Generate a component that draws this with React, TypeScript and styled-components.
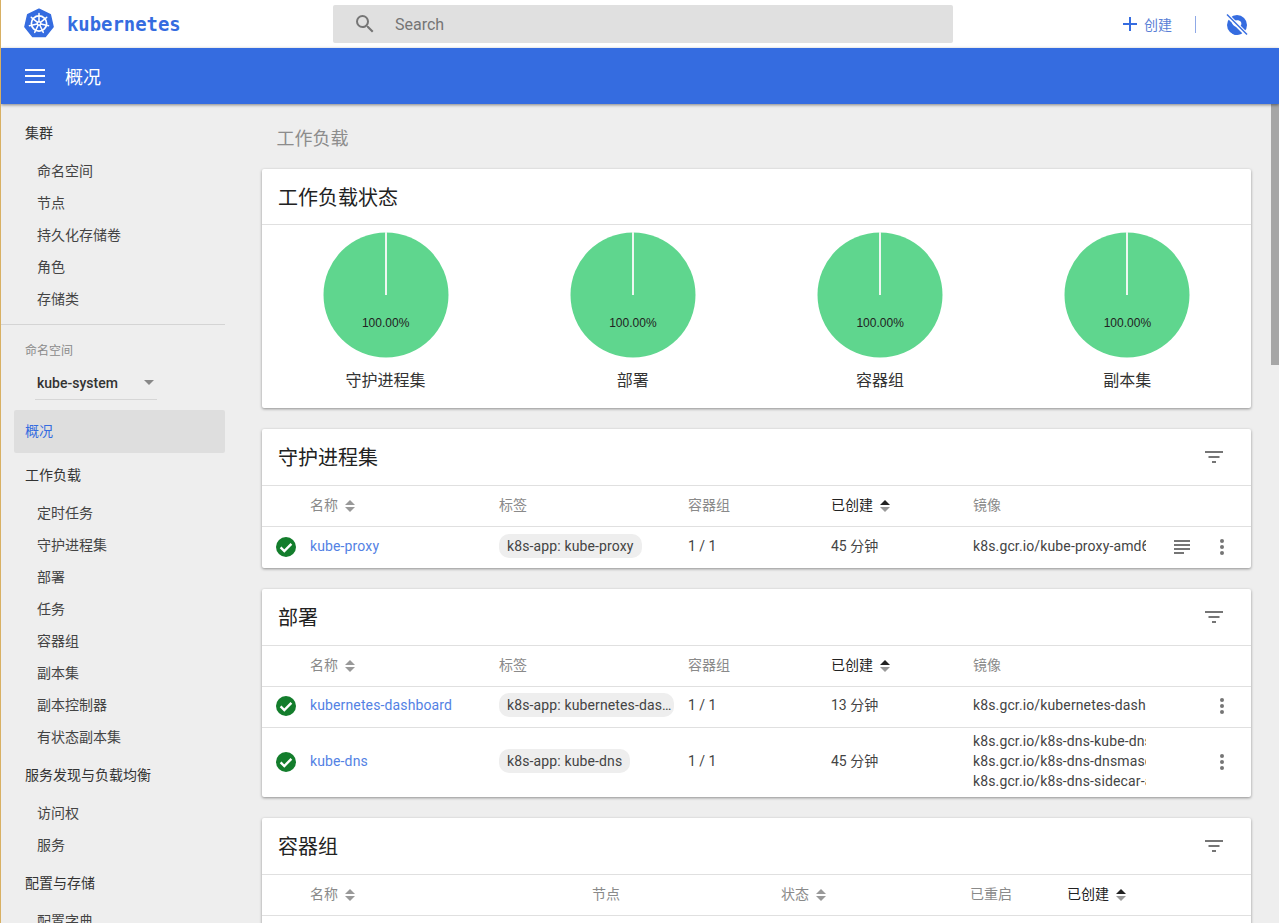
import React from "react";
import styled, { createGlobalStyle } from "styled-components";

const FONT = `Roboto, "Noto Sans CJK SC", "Liberation Sans", sans-serif`;
const BLUE = "#356ce0";

const Global = createGlobalStyle`
  html, body { margin: 0; padding: 0; height: 100%; overflow: hidden; background: #eeeeee; }
  * { box-sizing: border-box; }
  #root { height: 100%; }
`;

const Page = styled.div`
  height: 923px;
  display: flex;
  flex-direction: column;
  border-left: 1px solid #d8b063;
  font-family: ${FONT};
  font-size: 14px;
  color: rgba(0, 0, 0, 0.87);
  overflow: hidden;
`;

const Toolbar = styled.header`
  height: 48px;
  flex: none;
  background: #fff;
  display: flex;
  align-items: center;
  padding-left: 22px;
`;

const Logo = styled.div`
  display: flex;
  align-items: center;
  width: 310px;
  gap: 12px;
`;

const LogoText = styled.span`
  font-family: "DejaVu Sans Mono", monospace;
  font-weight: 700;
  font-size: 18.9px;
  color: ${BLUE};
`;

const SearchBox = styled.div`
  width: 620px;
  height: 38px;
  background: #e0e0e0;
  border-radius: 2px;
  display: flex;
  align-items: center;
  padding-left: 20px;
  gap: 18px;
  color: #757575;
  font-size: 16px;
`;

const ToolActions = styled.div`
  margin-left: auto;
  display: flex;
  align-items: center;
  padding-right: 31px;
`;

const CreateButton = styled.div`
  display: flex;
  align-items: center;
  gap: 6px;
  color: #5a7fd6;
  font-size: 14px;
`;

const ToolDivider = styled.span`
  width: 1px;
  height: 17px;
  background: #8fa9e6;
  margin: 0 30px 0 23px;
`;

const TitleBar = styled.div`
  height: 56px;
  flex: none;
  background: ${BLUE};
  color: #fff;
  display: flex;
  align-items: center;
  padding-left: 24px;
  gap: 20px;
  font-size: 18px;
  box-shadow: 0 1px 3px rgba(0, 0, 0, 0.45);
  position: relative;
  z-index: 2;
`;

const Body = styled.div`
  flex: 1;
  min-height: 0;
  display: flex;
`;

const Sidebar = styled.nav`
  width: 224px;
  flex: none;
  padding-top: 6px;
  overflow: hidden;
`;

const NavHeader = styled.div`
  height: 44px;
  padding-left: 24px;
  display: flex;
  align-items: center;
  color: #333;
  font-size: 14px;
`;

const NavActive = styled(NavHeader)`
  margin: 0 0 -1px 13px;
  padding: 0 0 3px 11px;
  height: 43px;
  background: #dedede;
  border-radius: 2px;
  color: ${BLUE};
`;

const NavItem = styled.div`
  height: 32px;
  padding-left: 36px;
  display: flex;
  align-items: center;
  color: #444;
  font-size: 14px;
`;

const NavDivider = styled.hr`
  border: 0;
  height: 1px;
  background: #d4d4d4;
  margin: 10px 0 0;
`;

const NamespaceBlock = styled.div`
  height: 85px;
  padding: 18px 0 0 24px;
`;

const NamespaceLabel = styled.div`
  font-size: 12px;
  line-height: 16px;
  color: #8a8a8a;
`;

const NamespaceSelect = styled.div`
  width: 122px;
  height: 32px;
  margin: 9px 0 0 10px;
  padding: 0 0 2px 2px;
  display: flex;
  align-items: center;
  justify-content: space-between;
  border-bottom: 1px solid #d6d6d6;
  font-weight: 500;
  font-size: 14px;
  color: #333;
`;

const SelectArrow = styled.span`
  width: 0;
  height: 0;
  margin-right: 3px;
  border-left: 5px solid transparent;
  border-right: 5px solid transparent;
  border-top: 5px solid #888;
`;

const Main = styled.main`
  flex: 1;
  min-width: 0;
  position: relative;
  overflow: hidden;
  padding: 0 28px 0 37px;
`;

const ScrollThumb = styled.div`
  position: absolute;
  top: 0;
  right: 0;
  width: 8px;
  height: 261px;
  background: #a6a6a6;
`;

const PageTitle = styled.h2`
  margin: 0;
  height: 65px;
  padding: 21px 0 0 14.5px;
  font-size: 18px;
  line-height: 28px;
  font-weight: 400;
  color: #8c8c8c;
`;

const Card = styled.section`
  background: #fff;
  border-radius: 2px;
  box-shadow: 0 1px 3px rgba(0, 0, 0, 0.4);
  margin-bottom: 21px;
`;

const CardHeader = styled.div`
  height: 56px;
  padding: 0 25px 0 16px;
  display: flex;
  align-items: center;
  justify-content: space-between;
  border-bottom: 1px solid #e0e0e0;
  font-size: 20px;
  color: #222;
`;

const TableHeader = styled(CardHeader)`
  height: 57px;
  padding-bottom: 2px;
`;

const Charts = styled.div`
  display: grid;
  grid-template-columns: repeat(4, 1fr);
  height: 183px;
`;

const Chart = styled.div`
  display: flex;
  flex-direction: column;
  align-items: center;
  padding-top: 7px;
`;

const PieWrap = styled.div`
  width: 126px;
  height: 126px;
  position: relative;
`;

const PieLabel = styled.span`
  position: absolute;
  left: 0;
  right: 0;
  top: 84px;
  text-align: center;
  font-family: "Liberation Sans", sans-serif;
  font-size: 12px;
  line-height: 14px;
  color: #222;
`;

const ChartName = styled.div`
  margin-top: 11px;
  font-size: 16px;
  line-height: 24px;
  color: #333;
`;

const Row = styled.div<{ $cols: string; $h: number }>`
  display: grid;
  grid-template-columns: ${(p) => p.$cols};
  align-items: center;
  height: ${(p) => p.$h}px;
  padding-bottom: 2px;
  border-bottom: 1px solid #e0e0e0;
  &:last-child { border-bottom: 0; }
`;

const HeadCell = styled.div<{ $active?: boolean }>`
  display: flex;
  align-items: center;
  gap: 7px;
  font-size: 14px;
  color: ${(p) => (p.$active ? "#222" : "#8a8a8a")};
`;

const HeadLabel = styled.span`
  line-height: 20px;
`;

const SortSvg = styled.svg`
  margin-top: 2px;
`;

const FilterSvg = styled.svg`
  margin-top: 2px;
`;

const StatusCell = styled.div`
  display: flex;
  padding-left: 14px;
`;

const LinkCell = styled.div`
  color: ${BLUE};
  font-size: 14px;
  line-height: 20px;
  letter-spacing: 0.13px;
  opacity: 0.85;
  margin-bottom: 2px;
`;

const TextCell = styled.div`
  color: #444;
  font-size: 14px;
  line-height: 20px;
  margin-bottom: 2px;
`;

const ChipCell = styled.div`
  margin-bottom: 2px;
`;

const Chip = styled.span<{ $clipped?: boolean }>`
  display: inline-block;
  height: 24px;
  line-height: 24px;
  padding: 0 ${(p) => (p.$clipped ? 2 : 8)}px 0 8px;
  border-radius: 10px;
  background: #eeeeee;
  color: #444;
  font-size: 14px;
  letter-spacing: 0.13px;
  white-space: nowrap;
  vertical-align: middle;
`;

const ImageCell = styled.div`
  overflow: hidden;
  white-space: nowrap;
  color: #444;
  font-size: 14px;
  letter-spacing: 0.13px;
  line-height: 20px;
  margin-bottom: 2px;
`;

const Actions = styled.div`
  display: flex;
  align-items: center;
  justify-content: flex-end;
  padding-right: 17px;
  gap: 16px;
`;

const Sort = ({ active }: { active?: boolean }) => (
  <SortSvg width="10" height="14" viewBox="0 0 10 14">
    <path d="M5 1 L10 6 H0 Z" fill={active ? "#222" : "#999"} />
    <path d="M0 8 H10 L5 13 Z" fill="#999" />
  </SortSvg>
);

const Filter = () => (
  <FilterSvg width="24" height="24" viewBox="0 0 24 24" fill="#757575">
    <path d="M3 6h18v2H3zM6.5 11h11v2h-11zM10 16h4v2h-4z" />
  </FilterSvg>
);

const More = () => (
  <svg width="24" height="24" viewBox="0 0 24 24" fill="#757575">
    <circle cx="12" cy="6" r="2" />
    <circle cx="12" cy="12" r="2" />
    <circle cx="12" cy="18" r="2" />
  </svg>
);

const Logs = () => (
  <svg width="24" height="24" viewBox="0 0 24 24" fill="#757575">
    <path d="M4 5h16v2H4zM4 9h16v2H4zM4 13h16v2H4zM4 17h10v2H4z" />
  </svg>
);

const Check = () => (
  <svg width="20" height="20" viewBox="0 0 20 20">
    <circle cx="10" cy="10" r="10" fill="#137d2c" />
    <path d="M4.6 10.4 L8.3 14 L15.4 6.8" fill="none" stroke="#fff" strokeWidth="2.4" />
  </svg>
);

const Pie = () => (
  <svg width="126" height="126" viewBox="0 0 126 126">
    <circle cx="63" cy="63" r="62.5" fill="#5fd68e" />
    <rect x="62" y="0" width="2" height="63" fill="#eef7f1" />
  </svg>
);

const KubeLogo = () => (
  <svg width="32" height="32" viewBox="0 0 32 32">
    <path d="M16 1.2 L27.3 6.6 L30.1 18.8 L22.3 28.6 H9.7 L1.9 18.8 L4.7 6.6 Z" fill={BLUE} stroke={BLUE} strokeWidth="1.5" strokeLinejoin="round" />
    <g fill="none" stroke="#fff" strokeLinecap="round">
      <circle cx="16" cy="15.5" r="7.6" strokeWidth="1.7" />
      <circle cx="16" cy="15.5" r="1.7" strokeWidth="1.4" />
      <path strokeWidth="1.5" d="M16 5.6V13.6M23.7 9.3L17.5 14.3M25.6 17.7L17.9 15.9M20.3 24.4L16.9 17.2M11.7 24.4L15.1 17.2M6.4 17.7L14.1 15.9M8.3 9.3L14.5 14.3" />
    </g>
  </svg>
);

const SearchIcon = () => (
  <svg width="24" height="24" viewBox="0 0 24 24" fill="#757575">
    <path d="M15.5 14h-.79l-.28-.27A6.47 6.47 0 0 0 16 9.5 6.5 6.5 0 1 0 9.5 16c1.61 0 3.09-.59 4.23-1.57l.27.28v.79l5 4.99L20.49 19l-4.99-5zm-6 0C7.01 14 5 11.99 5 9.5S7.01 5 9.5 5 14 7.01 14 9.5 11.99 14 9.5 14z" />
  </svg>
);

const Menu = () => (
  <svg width="20" height="14" viewBox="0 0 20 14" fill="#fff">
    <path d="M0 0h20v2H0zM0 6h20v2H0zM0 12h20v2H0z" />
  </svg>
);

const Plus = () => (
  <svg width="16" height="16" viewBox="0 0 16 16" fill={BLUE}>
    <path d="M7 1h2v6h6v2H9v6H7V9H1V7h6z" />
  </svg>
);

const NoUser = () => (
  <svg width="22" height="24" viewBox="0 0 22 24">
    <circle cx="11" cy="13" r="10" fill={BLUE} />
    <path d="M6 11c1-3 7-4 9-1 1 2 0 4-2 5-3 0-6-1-7-4z" fill="#fff" />
    <path d="M3 14c3 2 7 5 12 8l-6 1c-3-1-5-4-6-9z" fill={BLUE} />
    <path d="M1.5 3.5 L20.5 22.5" stroke="#fff" strokeWidth="4" />
    <path d="M1 2.5 L21 22.5" stroke={BLUE} strokeWidth="1.4" />
  </svg>
);

const COLS = "48px 189px 189px 143px 142px 173px 1fr";
const POD_COLS = "48px 282px 189px 189px 97px 1fr";

const nav: { title: string; items: string[] }[] = [
  { title: "工作负载", items: ["定时任务", "守护进程集", "部署", "任务", "容器组", "副本集", "副本控制器", "有状态副本集"] },
  { title: "服务发现与负载均衡", items: ["访问权", "服务"] },
  { title: "配置与存储", items: ["配置字典"] },
];

const WorkloadHead = () => (
  <Row $cols={COLS} $h={41}>
    <span />
    <HeadCell><HeadLabel>名称</HeadLabel><Sort /></HeadCell>
    <HeadCell><HeadLabel>标签</HeadLabel></HeadCell>
    <HeadCell><HeadLabel>容器组</HeadLabel></HeadCell>
    <HeadCell $active><HeadLabel>已创建</HeadLabel><Sort active /></HeadCell>
    <HeadCell><HeadLabel>镜像</HeadLabel></HeadCell>
    <span />
  </Row>
);

export default function App() {
  return (
    <Page>
      <Global />
      <Toolbar>
        <Logo>
          <KubeLogo />
          <LogoText>kubernetes</LogoText>
        </Logo>
        <SearchBox>
          <SearchIcon />
          <span>Search</span>
        </SearchBox>
        <ToolActions>
          <CreateButton><Plus />创建</CreateButton>
          <ToolDivider />
          <NoUser />
        </ToolActions>
      </Toolbar>
      <TitleBar>
        <Menu />
        <span>概况</span>
      </TitleBar>
      <Body>
        <Sidebar>
          <NavHeader>集群</NavHeader>
          {["命名空间", "节点", "持久化存储卷", "角色", "存储类"].map((t) => (
            <NavItem key={t}>{t}</NavItem>
          ))}
          <NavDivider />
          <NamespaceBlock>
            <NamespaceLabel>命名空间</NamespaceLabel>
            <NamespaceSelect>kube-system<SelectArrow /></NamespaceSelect>
          </NamespaceBlock>
          <NavActive>概况</NavActive>
          {nav.map((g) => (
            <React.Fragment key={g.title}>
              <NavHeader>{g.title}</NavHeader>
              {g.items.map((t) => <NavItem key={t}>{t}</NavItem>)}
            </React.Fragment>
          ))}
        </Sidebar>
        <Main>
          <ScrollThumb />
          <PageTitle>工作负载</PageTitle>
          <Card>
            <CardHeader>工作负载状态</CardHeader>
            <Charts>
              {["守护进程集", "部署", "容器组", "副本集"].map((t) => (
                <Chart key={t}>
                  <PieWrap>
                    <Pie />
                    <PieLabel>100.00%</PieLabel>
                  </PieWrap>
                  <ChartName>{t}</ChartName>
                </Chart>
              ))}
            </Charts>
          </Card>
          <Card>
            <TableHeader>守护进程集<Filter /></TableHeader>
            <WorkloadHead />
            <Row $cols={COLS} $h={41}>
              <StatusCell><Check /></StatusCell>
              <LinkCell>kube-proxy</LinkCell>
              <ChipCell><Chip>k8s-app: kube-proxy</Chip></ChipCell>
              <TextCell>1 / 1</TextCell>
              <TextCell>45 分钟</TextCell>
              <ImageCell>k8s.gcr.io/kube-proxy-amd64:v1.10.0</ImageCell>
              <Actions><Logs /><More /></Actions>
            </Row>
          </Card>
          <Card>
            <TableHeader>部署<Filter /></TableHeader>
            <WorkloadHead />
            <Row $cols={COLS} $h={41}>
              <StatusCell><Check /></StatusCell>
              <LinkCell>kubernetes-dashboard</LinkCell>
              <ChipCell><Chip $clipped>k8s-app: kubernetes-das…</Chip></ChipCell>
              <TextCell>1 / 1</TextCell>
              <TextCell>13 分钟</TextCell>
              <ImageCell>k8s.gcr.io/kubernetes-dashboard-amd64</ImageCell>
              <Actions><More /></Actions>
            </Row>
            <Row $cols={COLS} $h={69}>
              <StatusCell><Check /></StatusCell>
              <LinkCell>kube-dns</LinkCell>
              <ChipCell><Chip>k8s-app: kube-dns</Chip></ChipCell>
              <TextCell>1 / 1</TextCell>
              <TextCell>45 分钟</TextCell>
              <ImageCell>
                <div>k8s.gcr.io/k8s-dns-kube-dns-amd64</div>
                <div>k8s.gcr.io/k8s-dns-dnsmasq-nanny</div>
                <div>k8s.gcr.io/k8s-dns-sidecar-amd64</div>
              </ImageCell>
              <Actions><More /></Actions>
            </Row>
          </Card>
          <Card>
            <TableHeader>容器组<Filter /></TableHeader>
            <Row $cols={POD_COLS} $h={41}>
              <span />
              <HeadCell><HeadLabel>名称</HeadLabel><Sort /></HeadCell>
              <HeadCell><HeadLabel>节点</HeadLabel></HeadCell>
              <HeadCell><HeadLabel>状态</HeadLabel><Sort /></HeadCell>
              <HeadCell><HeadLabel>已重启</HeadLabel></HeadCell>
              <HeadCell $active><HeadLabel>已创建</HeadLabel><Sort active /></HeadCell>
            </Row>
            <Row $cols={POD_COLS} $h={41}>
              <StatusCell><Check /></StatusCell>
              <LinkCell>kube-proxy</LinkCell>
              <TextCell />
              <TextCell>Running</TextCell>
              <TextCell>0</TextCell>
              <TextCell>45 分钟</TextCell>
            </Row>
          </Card>
        </Main>
      </Body>
    </Page>
  );
}
